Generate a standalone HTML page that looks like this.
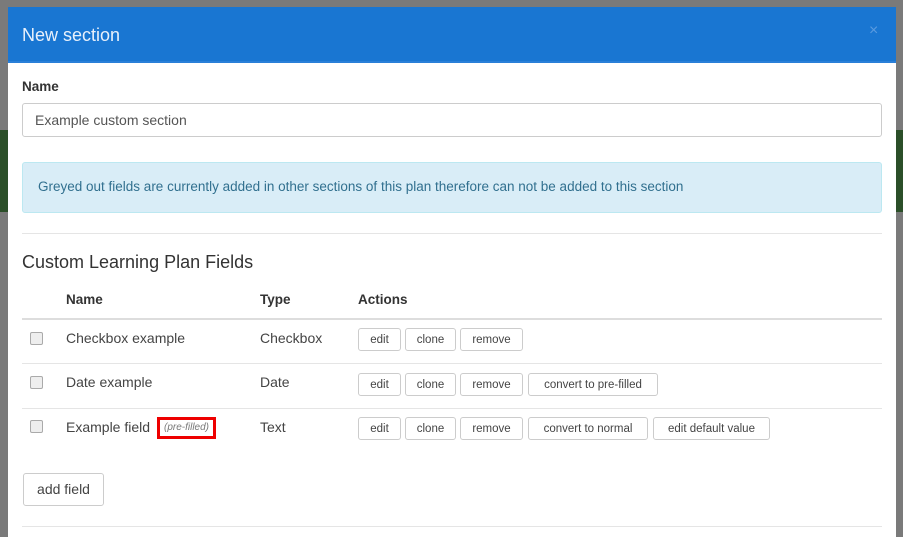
<!DOCTYPE html>
<html><head><style>
*{box-sizing:border-box;margin:0;padding:0}
body{width:903px;height:529px;overflow:hidden;background:#7a7a7a;font-family:"Liberation Sans",sans-serif;color:#333;position:relative}
.a{position:absolute}
.g{background:#2b4f29}
.modal{left:8px;top:7px;width:888px;height:530px;background:#fff}
.hdr{left:8px;top:7px;width:888px;height:56px;background:#1976d2;border-bottom:2px solid #2a7fd8}
.btn{position:absolute;height:23px;border:1px solid #ccc;border-radius:3px;background:#fff;font-size:11.5px;color:#444;text-align:center;line-height:23px}
.cb{position:absolute;left:30px;width:13px;height:13px;border:1px solid #aaa;border-radius:2px;background:#eee}
.t{position:absolute;font-size:14px;color:#444}
.hr{position:absolute;left:22px;width:860px;height:1px;background:#e5e5e5}
</style></head><body>
<div class="a g" style="left:0;top:130px;width:903px;height:82px"></div>
<div class="a modal"></div>
<div class="a hdr"></div>
<div class="a" style="left:22px;top:25px;font-size:18px;color:#e8f0fb">New section</div>
<div class="a" style="left:869px;top:22px;font-size:16px;color:#5a9be0">×</div>
<div class="a" style="left:22px;top:79px;font-size:13.5px;font-weight:bold;color:#333">Name</div>
<div class="a" style="left:22px;top:103px;width:860px;height:34px;border:1px solid #ccc;border-radius:3px;font-size:14px;color:#555;padding:8px 12px">Example custom section</div>
<div class="a" style="left:22px;top:162px;width:860px;height:51px;background:#d9edf7;border:1px solid #bce8f1;border-radius:3px;font-size:13.5px;color:#31708f;padding:16px 15px">Greyed out fields are currently added in other sections of this plan therefore can not be added to this section</div>
<div class="hr" style="top:233px"></div>
<div class="a" style="left:22px;top:252px;font-size:18px;color:#333">Custom Learning Plan Fields</div>
<div class="t" style="left:66px;top:292px;font-weight:bold;font-size:13.5px;color:#333">Name</div>
<div class="t" style="left:260px;top:292px;font-weight:bold;font-size:13.5px;color:#333">Type</div>
<div class="t" style="left:358px;top:292px;font-weight:bold;font-size:13.5px;color:#333">Actions</div>
<div class="hr" style="top:318px;height:2px;background:#ddd"></div>
<div class="cb" style="top:332px"></div>
<div class="t" style="left:66px;top:330px">Checkbox example</div>
<div class="t" style="left:260px;top:330px">Checkbox</div>
<div class="btn" style="left:358px;top:328px;width:43px">edit</div>
<div class="btn" style="left:405px;top:328px;width:51px">clone</div>
<div class="btn" style="left:460px;top:328px;width:63px">remove</div>
<div class="hr" style="top:363px"></div>
<div class="cb" style="top:376px"></div>
<div class="t" style="left:66px;top:374px">Date example</div>
<div class="t" style="left:260px;top:374px">Date</div>
<div class="btn" style="left:358px;top:373px;width:43px">edit</div>
<div class="btn" style="left:405px;top:373px;width:51px">clone</div>
<div class="btn" style="left:460px;top:373px;width:63px">remove</div>
<div class="btn" style="left:528px;top:373px;width:130px">convert to pre-filled</div>
<div class="hr" style="top:408px"></div>
<div class="cb" style="top:420px"></div>
<div class="t" style="left:66px;top:419px">Example field</div>
<div class="a" style="left:157px;top:417px;width:59px;height:22px;border:3px solid #e00;font-size:10px;font-style:italic;color:#777;text-align:center;line-height:16px">(pre-filled)</div>
<div class="t" style="left:260px;top:419px">Text</div>
<div class="btn" style="left:358px;top:417px;width:43px">edit</div>
<div class="btn" style="left:405px;top:417px;width:51px">clone</div>
<div class="btn" style="left:460px;top:417px;width:63px">remove</div>
<div class="btn" style="left:528px;top:417px;width:120px">convert to normal</div>
<div class="btn" style="left:653px;top:417px;width:117px">edit default value</div>
<div class="btn" style="left:23px;top:473px;width:81px;height:33px;line-height:31px;font-size:14px">add field</div>
<div class="hr" style="top:526px"></div>
</body></html>
